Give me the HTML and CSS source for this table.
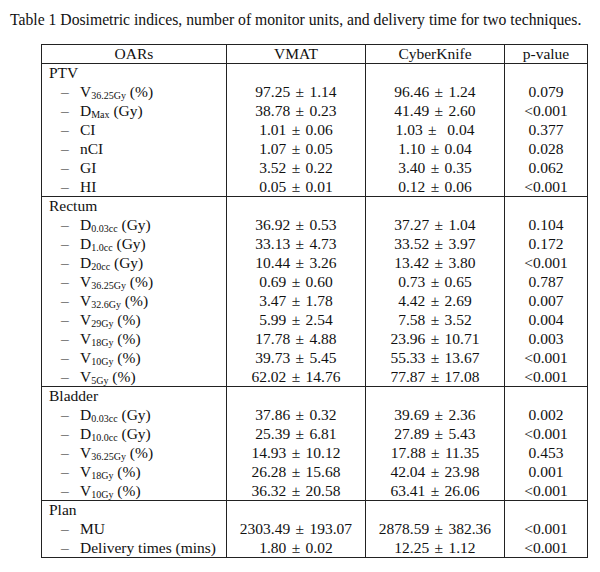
FILE: index.html
```html
<!DOCTYPE html>
<html>
<head>
<meta charset="utf-8">
<link rel="stylesheet" href="styles.css">
</head>
<body>
<p class="title">Table 1 Dosimetric indices, number of monitor units, and delivery time for two techniques.</p>
<table class="tbl">
  <colgroup>
    <col class="c1"><col class="c2"><col class="c3"><col class="c4">
  </colgroup>
  <thead>
    <tr><th>OARs</th><th>VMAT</th><th>CyberKnife</th><th>p-value</th></tr>
  </thead>
  <tbody class="grp">
    <tr class="head-row"><td class="grp-name">PTV</td><td></td><td></td><td></td></tr>
    <tr><td class="lbl"><span class="dash">–</span>V<sub>36.25Gy</sub> (%)</td><td class="val">97.25 ± 1.14</td><td class="val">96.46 ± 1.24</td><td>0.079</td></tr>
    <tr><td class="lbl"><span class="dash">–</span>D<sub>Max</sub> (Gy)</td><td class="val">38.78 ± 0.23</td><td class="val">41.49 ± 2.60</td><td>&lt;0.001</td></tr>
    <tr><td class="lbl"><span class="dash">–</span>CI</td><td class="val">1.01 ± 0.06</td><td class="val">1.03 ±&nbsp; 0.04</td><td>0.377</td></tr>
    <tr><td class="lbl"><span class="dash">–</span>nCI</td><td class="val">1.07 ± 0.05</td><td class="val">1.10 ± 0.04</td><td>0.028</td></tr>
    <tr><td class="lbl"><span class="dash">–</span>GI</td><td class="val">3.52 ± 0.22</td><td class="val">3.40 ± 0.35</td><td>0.062</td></tr>
    <tr><td class="lbl"><span class="dash">–</span>HI</td><td class="val">0.05 ± 0.01</td><td class="val">0.12 ± 0.06</td><td>&lt;0.001</td></tr>
  </tbody>
  <tbody class="grp">
    <tr class="head-row"><td class="grp-name">Rectum</td><td></td><td></td><td></td></tr>
    <tr><td class="lbl"><span class="dash">–</span>D<sub>0.03cc</sub> (Gy)</td><td class="val">36.92 ± 0.53</td><td class="val">37.27 ± 1.04</td><td>0.104</td></tr>
    <tr><td class="lbl"><span class="dash">–</span>D<sub>1.0cc</sub> (Gy)</td><td class="val">33.13 ± 4.73</td><td class="val">33.52 ± 3.97</td><td>0.172</td></tr>
    <tr><td class="lbl"><span class="dash">–</span>D<sub>20cc</sub> (Gy)</td><td class="val">10.44 ± 3.26</td><td class="val">13.42 ± 3.80</td><td>&lt;0.001</td></tr>
    <tr><td class="lbl"><span class="dash">–</span>V<sub>36.25Gy</sub> (%)</td><td class="val">0.69 ± 0.60</td><td class="val">0.73 ± 0.65</td><td>0.787</td></tr>
    <tr><td class="lbl"><span class="dash">–</span>V<sub>32.6Gy</sub> (%)</td><td class="val">3.47 ± 1.78</td><td class="val">4.42 ± 2.69</td><td>0.007</td></tr>
    <tr><td class="lbl"><span class="dash">–</span>V<sub>29Gy</sub> (%)</td><td class="val">5.99 ± 2.54</td><td class="val">7.58 ± 3.52</td><td>0.004</td></tr>
    <tr><td class="lbl"><span class="dash">–</span>V<sub>18Gy</sub> (%)</td><td class="val">17.78 ± 4.88</td><td class="val">23.96 ± 10.71</td><td>0.003</td></tr>
    <tr><td class="lbl"><span class="dash">–</span>V<sub>10Gy</sub> (%)</td><td class="val">39.73 ± 5.45</td><td class="val">55.33 ± 13.67</td><td>&lt;0.001</td></tr>
    <tr><td class="lbl"><span class="dash">–</span>V<sub>5Gy</sub> (%)</td><td class="val">62.02 ± 14.76</td><td class="val">77.87 ± 17.08</td><td>&lt;0.001</td></tr>
  </tbody>
  <tbody class="grp">
    <tr class="head-row"><td class="grp-name">Bladder</td><td></td><td></td><td></td></tr>
    <tr><td class="lbl"><span class="dash">–</span>D<sub>0.03cc</sub> (Gy)</td><td class="val">37.86 ± 0.32</td><td class="val">39.69 ± 2.36</td><td>0.002</td></tr>
    <tr><td class="lbl"><span class="dash">–</span>D<sub>10.0cc</sub> (Gy)</td><td class="val">25.39 ± 6.81</td><td class="val">27.89 ± 5.43</td><td>&lt;0.001</td></tr>
    <tr><td class="lbl"><span class="dash">–</span>V<sub>36.25Gy</sub> (%)</td><td class="val">14.93 ± 10.12</td><td class="val">17.88 ± 11.35</td><td>0.453</td></tr>
    <tr><td class="lbl"><span class="dash">–</span>V<sub>18Gy</sub> (%)</td><td class="val">26.28 ± 15.68</td><td class="val">42.04 ± 23.98</td><td>0.001</td></tr>
    <tr><td class="lbl"><span class="dash">–</span>V<sub>10Gy</sub> (%)</td><td class="val">36.32 ± 20.58</td><td class="val">63.41 ± 26.06</td><td>&lt;0.001</td></tr>
  </tbody>
  <tbody class="grp">
    <tr class="head-row"><td class="grp-name">Plan</td><td></td><td></td><td></td></tr>
    <tr><td class="lbl"><span class="dash">–</span>MU</td><td class="val">2303.49 ± 193.07</td><td class="val">2878.59 ± 382.36</td><td>&lt;0.001</td></tr>
    <tr><td class="lbl"><span class="dash">–</span>Delivery times (mins)</td><td class="val">1.80 ± 0.02</td><td class="val">12.25 ± 1.12</td><td>&lt;0.001</td></tr>
  </tbody>
</table>
</body>
</html>
```

FILE: styles.css
```css
html, body {
  margin: 0;
  padding: 0;
  background: #fff;
}
body {
  font-family: "Liberation Serif", "Times New Roman", serif;
  color: #111;
  font-size: 15.5px;
}
.title {
  margin: 0;
  padding: 11px 0 0 10px;
  height: 33px;
  font-size: 15.7px;
  line-height: 18px;
  white-space: nowrap;
}
.tbl {
  margin-left: 41px;
  border-collapse: collapse;
  table-layout: fixed;
  width: 546px;
  border: 1px solid #222;
  font-family: inherit;
  font-size: 15.5px;
}
.c1 { width: 185px; }
.c2 { width: 139px; }
.c3 { width: 139px; }
.c4 { width: 83px; }
.tbl th {
  font-weight: normal;
  height: 18px;
  padding: 0;
  line-height: 18px;
  border: 1px solid #222;
  text-align: center;
}
.tbl td {
  height: 18px;
  padding: 1px 0 0;
  line-height: 18px;
  text-align: center;
  border-left: 1px solid #222;
  border-right: 1px solid #222;
  white-space: nowrap;
}
.tbl td.val {
  word-spacing: 1.5px;
}
.tbl .head-row td {
  height: 18px;
  padding: 0;
  line-height: 18px;
  vertical-align: top;
}
.grp {
  border-top: 1px solid #222;
}
.tbl td.grp-name {
  text-align: left;
  padding-left: 7px;
}
.tbl td.lbl {
  text-align: left;
  padding-left: 19px;
}
.dash {
  display: inline-block;
  width: 19px;
}
sub {
  font-size: 10px;
  vertical-align: -1.5px;
  line-height: 0;
}
```
